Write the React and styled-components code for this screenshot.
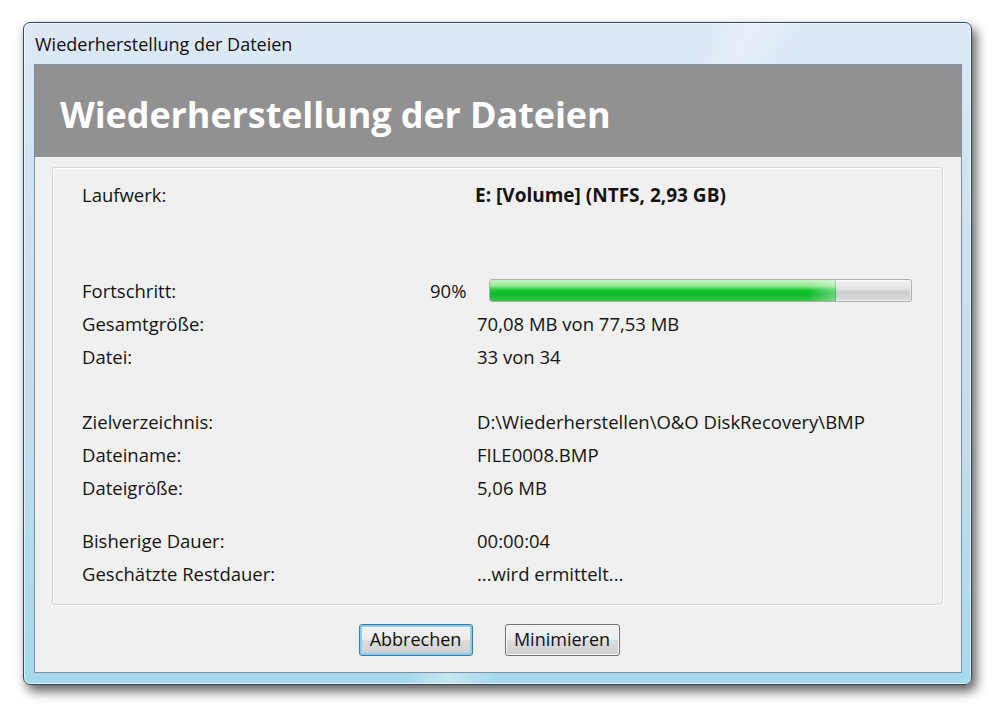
import styled, { createGlobalStyle } from 'styled-components';

const GlobalStyle = createGlobalStyle`
  html, body {
    margin: 0;
    padding: 0;
    background: #ffffff;
  }
  body {
    font-family: "Open Sans", "Noto Sans", sans-serif;
    color: #141414;
  }
`;

const Page = styled.div`
  width: 1001px;
  height: 714px;
  padding: 22px 0 0 23px;
  box-sizing: border-box;
`;

const Window = styled.div`
  width: 949px;
  height: 663px;
  box-sizing: border-box;
  display: flex;
  flex-direction: column;
  border: 1px solid #34485a;
  border-radius: 7px;
  padding: 0 9px 11px 10px;
  background:
    linear-gradient(115deg, transparent 0%, transparent 55%, rgba(255, 255, 255, 0.35) 58%, transparent 62%, transparent 100%),
    linear-gradient(180deg, #dde9f6 0%, #d3e3f3 20%, #c6dcee 60%, #a6d9ec 100%);
  box-shadow: 4px 6px 12px rgba(0, 0, 0, 0.65), inset 0 0 0 1px rgba(255, 255, 255, 0.6);
`;

const TitleBar = styled.div`
  height: 41px;
  display: flex;
  align-items: center;
  padding-left: 1px;
  font-size: 18px;
  color: #101010;
`;

const Client = styled.div`
  flex: 1;
  display: flex;
  flex-direction: column;
  background: #f0f0f0;
  border: 1px solid #7f91a0;
`;

const Header = styled.div`
  height: 92px;
  display: flex;
  align-items: center;
  padding-left: 25px;
  background: #919191;
`;

const Heading = styled.h1`
  margin: 6px 0 0;
  font-size: 36px;
  font-weight: 700;
  color: #ffffff;
  letter-spacing: -0.1px;
`;

const Body = styled.div`
  flex: 1;
  display: flex;
  flex-direction: column;
  padding: 10px 18px 0 17px;
`;

const Group = styled.div`
  height: 438px;
  box-sizing: border-box;
  padding: 10px 0 0 29px;
  border: 1px solid #d6d6d6;
  border-radius: 3px;
  box-shadow: inset 1px 1px 0 #ffffff, 1px 1px 0 #ffffff;
`;

const Section = styled.div`
  margin-bottom: ${({ $gap }) => $gap || 0}px;
`;

const Row = styled.div`
  height: 33px;
  display: flex;
  align-items: center;
  font-size: 18.5px;
`;

const Label = styled.span`
  width: ${({ $w }) => $w || 395}px;
  flex-shrink: 0;
`;

const Percent = styled.span`
  width: 36px;
  text-align: right;
`;

const Value = styled.span`
  font-weight: ${({ $bold }) => ($bold ? 700 : 400)};
  margin-left: ${({ $shift }) => $shift || 0}px;
  font-size: ${({ $bold }) => ($bold ? '19px' : 'inherit')};
`;

const Progress = styled.div`
  margin-left: 23px;
  width: 423px;
  height: 23px;
  box-sizing: border-box;
  border: 1px solid #b0b0b0;
  border-radius: 3px;
  background: linear-gradient(180deg, #f3f3f3 0%, #e2e2e2 45%, #cdcdcd 55%, #d9d9d9 100%);
  overflow: hidden;
  box-shadow: inset 0 0 0 1px rgba(255, 255, 255, 0.6);
`;

const Fill = styled.div`
  height: 100%;
  background:
    linear-gradient(90deg, rgba(0, 0, 0, 0) 0%, rgba(0, 0, 0, 0) 92%, rgba(255, 255, 255, 0.35) 100%),
    linear-gradient(180deg, #c3f5c3 0%, #8fe58f 30%, #22cc3c 45%, #0ab82a 65%, #2fc741 100%);
  border-right: 1px solid rgba(120, 200, 120, 0.4);
`;

const ButtonRow = styled.div`
  flex: 1;
  display: flex;
  justify-content: center;
  align-items: center;
  gap: 32px;
  padding: 2px 17px 0 0;
`;

const Button = styled.button`
  width: ${({ $w }) => $w}px;
  height: 32px;
  font-family: "Open Sans", "Noto Sans", sans-serif;
  font-size: 18px;
  color: #101010;
  padding: 0 0 2px;
  border-radius: 3px;
  border: 1px solid ${({ $default }) => ($default ? '#3a7ca8' : '#707070')};
  background: linear-gradient(180deg, #f4f4f4 0%, #ebebeb 48%, #dcdcdc 52%, #cfcfcf 100%);
  box-shadow: inset 0 0 0 ${({ $default }) => ($default ? '2px #86cfee' : '1px #fbfbfb')};
`;

const rows = [
  { gap: 63, items: [{ label: 'Laufwerk:', value: 'E: [Volume] (NTFS, 2,93 GB)', bold: true }] },
  {
    gap: 32,
    items: [
      { label: 'Fortschritt:', progress: 82, pct: '90%' },
      { label: 'Gesamtgröße:', value: '70,08 MB von 77,53 MB' },
      { label: 'Datei:', value: '33 von 34' },
    ],
  },
  {
    gap: 20,
    items: [
      { label: 'Zielverzeichnis:', value: 'D:\\Wiederherstellen\\O&O DiskRecovery\\BMP' },
      { label: 'Dateiname:', value: 'FILE0008.BMP' },
      { label: 'Dateigröße:', value: '5,06 MB' },
    ],
  },
  {
    gap: 0,
    items: [
      { label: 'Bisherige Dauer:', value: '00:00:04' },
      { label: 'Geschätzte Restdauer:', value: '...wird ermittelt...' },
    ],
  },
];

export default function App() {
  return (
    <>
      <GlobalStyle />
      <Page>
        <Window>
          <TitleBar>Wiederherstellung der Dateien</TitleBar>
          <Client>
            <Header>
              <Heading>Wiederherstellung der Dateien</Heading>
            </Header>
            <Body>
              <Group>
                {rows.map((section, i) => (
                  <Section key={i} $gap={section.gap}>
                    {section.items.map((item) =>
                      item.progress ? (
                        <Row key={item.label}>
                          <Label $w={348}>{item.label}</Label>
                          <Percent>{item.pct}</Percent>
                          <Progress>
                            <Fill style={{ width: `${item.progress}%` }} />
                          </Progress>
                        </Row>
                      ) : (
                        <Row key={item.label}>
                          <Label>{item.label}</Label>
                          <Value $bold={item.bold} $shift={item.bold ? -2 : 0}>
                            {item.value}
                          </Value>
                        </Row>
                      )
                    )}
                  </Section>
                ))}
              </Group>
              <ButtonRow>
                <Button $default $w={114}>Abbrechen</Button>
                <Button $w={115}>Minimieren</Button>
              </ButtonRow>
            </Body>
          </Client>
        </Window>
      </Page>
    </>
  );
}
